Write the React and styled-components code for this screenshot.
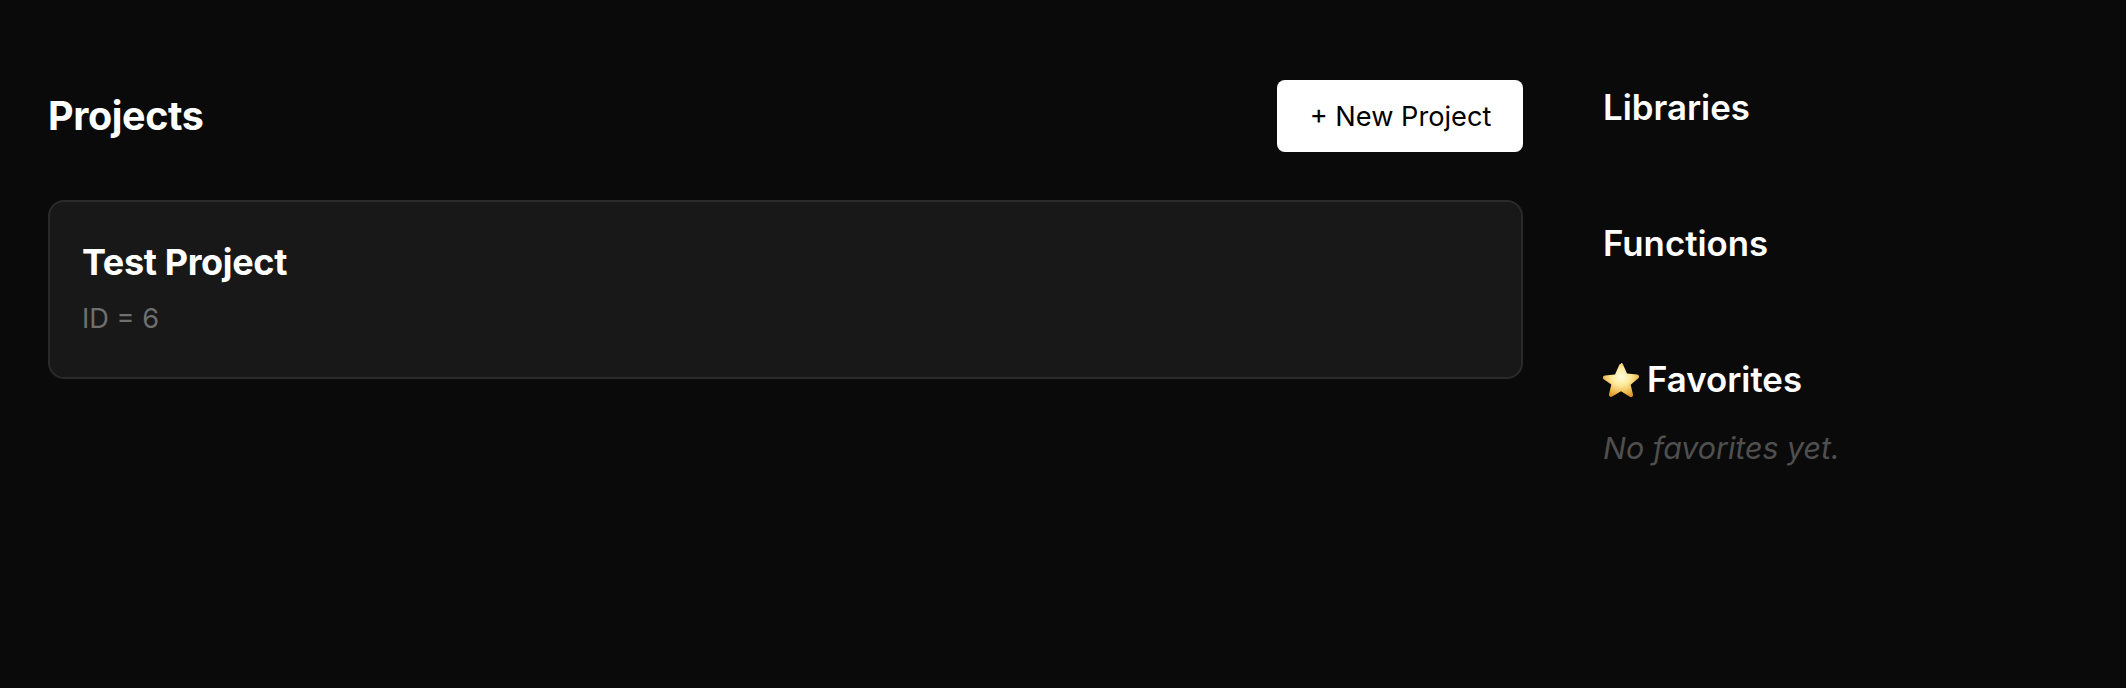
import React from 'react';
import styled, { createGlobalStyle } from 'styled-components';

const GlobalStyle = createGlobalStyle`
  html, body {
    margin: 0;
    background: #0a0a0a;
    font-family: "Inter", "Liberation Sans", sans-serif;
    color: #fff;
  }
`;

const StarIcon = () => (
  <StarSvg viewBox="0 0 36 35">
    <defs>
      <radialGradient id="starFill" cx="50%" cy="40%" r="62%">
        <stop offset="0%" stopColor="#fffbe0" />
        <stop offset="40%" stopColor="#fdeb9c" />
        <stop offset="80%" stopColor="#efb64e" />
        <stop offset="100%" stopColor="#d9922c" />
      </radialGradient>
    </defs>
    <path
      d="M18 1c.9 0 1.600.5 2 1.400l4 9.200 10 .9c1 .1 1.700.6 2 1.500.2.9 0 1.700-.7 2.300l-7.600 6.500 2.300 9.600c.2 1-.1 1.800-.8 2.300-.7.500-1.600.500-2.400 0L18 29.200l-8.800 5.300c-.8.500-1.700.500-2.400 0-.7-.5-1-1.300-.8-2.300l2.300-9.600L.7 17.300c-.7-.6-.9-1.400-.7-2.300.3-.9 1-1.400 2-1.500l10-.9 4-9.200c.4-.9 1.100-1.400 2-1.400z"
      fill="url(#starFill)"
    />
  </StarSvg>
);

export default function App() {
  return (
    <Page>
      <GlobalStyle />
      <Main>
        <Header>
          <PageTitle>Projects</PageTitle>
          <NewButton>+ New Project</NewButton>
        </Header>
        <ProjectCard>
          <ProjectName>Test Project</ProjectName>
          <ProjectId>ID = 6</ProjectId>
        </ProjectCard>
      </Main>
      <Sidebar>
        <Section>
          <SectionTitle>Libraries</SectionTitle>
        </Section>
        <Section>
          <SectionTitle>Functions</SectionTitle>
        </Section>
        <Section>
          <SectionTitle><StarIcon /> Favorites</SectionTitle>
          <Empty>No favorites yet.</Empty>
        </Section>
      </Sidebar>
    </Page>
  );
}

const Page = styled.div`
  display: flex;
  gap: 80px;
  padding: 80px 48px 0;
  min-height: 608px;
  background: #0a0a0a;
`;

const Main = styled.div`
  width: 1475px;
  flex: none;
`;

const Header = styled.div`
  display: flex;
  justify-content: space-between;
  align-items: center;
  margin-bottom: 48px;
`;

const PageTitle = styled.h1`
  margin: 0;
  font-size: 39.5px;
  font-weight: 700;
  letter-spacing: -0.01em;
  color: #fff;
`;

const NewButton = styled.button`
  width: 246px;
  height: 72px;
  padding: 0 0 0 1px;
  border: none;
  border-radius: 8px;
  background: #fff;
  color: #000;
  font-family: inherit;
  font-size: 27.2px;
  font-weight: 400;
`;

const ProjectCard = styled.div`
  box-sizing: border-box;
  height: 179px;
  padding: 39px 32px;
  background: #181818;
  border: 2px solid #2a2a2a;
  border-radius: 16px;
`;

const ProjectName = styled.h2`
  margin: 0 0 18px;
  font-size: 36px;
  line-height: 42px;
  font-weight: 700;
  letter-spacing: -0.01em;
  color: #fff;
`;

const ProjectId = styled.div`
  font-size: 27.2px;
  line-height: 36px;
  color: #6f6f6f;
`;

const Sidebar = styled.div`
  flex: 1;
  display: flex;
  flex-direction: column;
  gap: 92px;
  padding-top: 5px;
`;

const Section = styled.section``;

const SectionTitle = styled.h3`
  margin: 0;
  height: 44px;
  display: flex;
  align-items: center;
  gap: 8px;
  font-size: 34.8px;
  line-height: 44px;
  font-weight: 600;
  color: #fff;
`;

const StarSvg = styled.svg`
  width: 36px;
  height: 35px;
  flex: none;
`;

const Empty = styled.p`
  margin: 27px 0 0;
  font-size: 30.4px;
  line-height: 40px;
  font-style: italic;
  color: #4f4f4f;
`;
